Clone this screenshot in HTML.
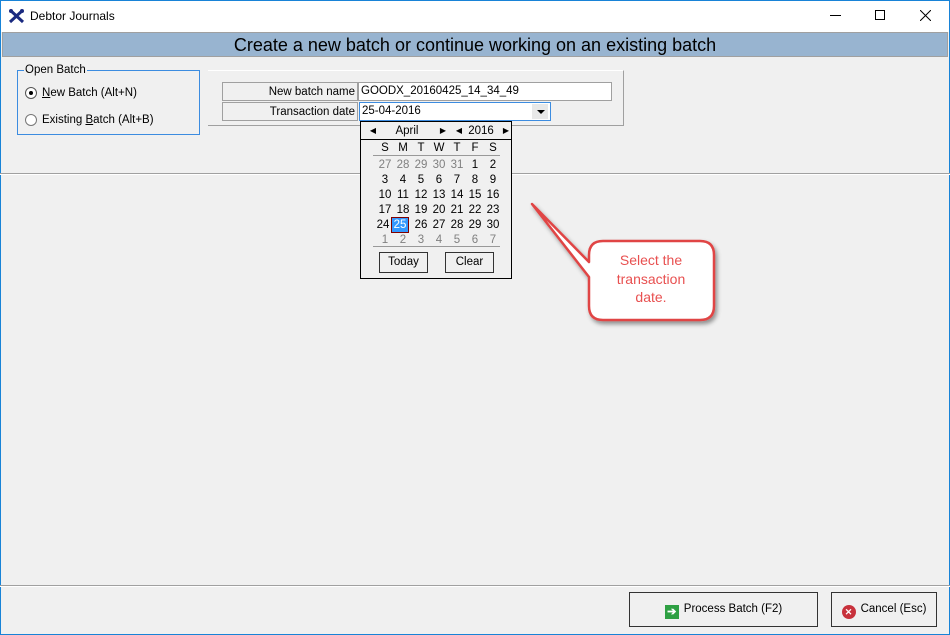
<!DOCTYPE html>
<html><head><style>
*{box-sizing:border-box;margin:0;padding:0}
body{width:950px;height:635px;background:#f0f0f0;font-family:"Liberation Sans",sans-serif;font-size:12px;color:#000;position:relative;overflow:hidden}
.a{position:absolute}
.lbl{position:absolute;border:1px solid #a0a0a0;background:#f0f0f0;text-align:right;padding-right:2px;line-height:18px;font-size:11.5px}
.cal div{position:absolute;width:18px;text-align:center;font-size:11.5px;line-height:14px}
.g{color:#808080}
.btn{position:absolute;border:1px solid #333;background:#f0f0f0;text-align:center;font-size:11.5px}
</style></head><body>
<div class="a" style="left:0;top:0;width:950px;height:635px;border:1px solid #1883d7"></div>
<div class="a" style="left:1px;top:1px;width:948px;height:31px;background:#fff"></div>
<svg class="a" style="left:8px;top:8px" width="18" height="16" viewBox="0 0 18 16"><path d="M2 2 L15 14 M15 2 L2 14" stroke="#1a2a80" stroke-width="3"/><circle cx="3" cy="3" r="2" fill="#1a2a80"/><circle cx="14" cy="3" r="2" fill="#1a2a80"/></svg>
<div class="a" style="left:30px;top:9px;font-size:12px">Debtor Journals</div>
<div class="a" style="left:830px;top:15px;width:11px;height:1px;background:#000"></div>
<div class="a" style="left:875px;top:10px;width:10px;height:10px;border:1px solid #000"></div>
<svg class="a" style="left:920px;top:10px" width="11" height="11"><path d="M0 0L11 11M11 0L0 11" stroke="#000" stroke-width="1"/></svg>
<div class="a" style="left:2px;top:32px;width:946px;height:25px;background:#98b4d0;border:1px solid #a0a0a0;text-align:center;font-size:18px;line-height:24px">Create a new batch or continue working on an existing batch</div>
<div class="a" style="left:17px;top:70px;width:183px;height:65px;border:1px solid #3c8ce0"></div>
<div class="a" style="left:24px;top:64px;background:#f0f0f0;padding:0 1px;font-size:11.5px">Open Batch</div>
<div class="a" style="left:25px;top:87px;width:12px;height:12px;border:1px solid #555;border-radius:50%;background:#fff"><div class="a" style="left:3px;top:3px;width:4px;height:4px;border-radius:50%;background:#000"></div></div>
<div class="a" style="left:42px;top:87px;font-size:11.5px"><u>N</u>ew Batch (Alt+N)</div>
<div class="a" style="left:25px;top:114px;width:12px;height:12px;border:1px solid #777;border-radius:50%;background:#fff"></div>
<div class="a" style="left:42px;top:114px;font-size:11.5px">Existing <u>B</u>atch (Alt+B)</div>
<div class="a" style="left:208px;top:70px;width:416px;height:56px;border-top:1px solid #fff;border-right:1px solid #a0a0a0;border-bottom:1px solid #a0a0a0"></div>
<div class="lbl" style="left:222px;top:82px;width:136px;height:19px">New batch name</div>
<div class="lbl" style="left:222px;top:102px;width:136px;height:19px">Transaction date</div>
<div class="a" style="left:358px;top:82px;width:254px;height:19px;border:1px solid #a0a0a0;background:#fff;padding-left:2px;line-height:17px;font-size:11.5px">GOODX_20160425_14_34_49</div>
<div class="a" style="left:359px;top:102px;width:192px;height:19px;border:1px solid #3c8ce0;background:#fff;padding-left:2px;line-height:17px;font-size:11.5px">25-04-2016<div class="a" style="left:172px;top:1px;width:16px;height:15px;background:#e8e8e8"></div><div class="a" style="left:177px;top:7px;border-left:4px solid transparent;border-right:4px solid transparent;border-top:4px solid #000"></div></div>
<div class="a" style="left:0;top:173px;width:950px;height:2px;background:#a0a0a0;border-bottom:1px solid #fff"></div>
<div class="a cal" style="left:360px;top:121px;width:152px;height:158px;border:1px solid #000;background:#f0f0f0">
<div style="left:0;top:0;width:150px;height:18px;border-bottom:1px solid #000"></div>
<div style="left:3px;top:2px;font-size:8px">◀</div><div style="left:33px;top:2px;width:26px">April</div><div style="left:73px;top:2px;font-size:8px">▶</div>
<div style="left:89px;top:2px;font-size:8px">◀</div><div style="left:107px;top:2px;width:26px">2016</div><div style="left:136px;top:2px;font-size:8px">▶</div>
<div style="left:12px;top:33px;width:127px;height:1px;background:#999"></div>
<div style="left:12px;top:124px;width:127px;height:1px;background:#999"></div>
</div>
<div class="btn" style="left:379px;top:252px;width:49px;height:21px;line-height:19px">Today</div>
<div class="btn" style="left:445px;top:252px;width:49px;height:21px;line-height:19px">Clear</div>
<svg class="a" style="left:525px;top:195px" width="210" height="135" viewBox="525 195 210 135">
<defs><filter id="s"><feDropShadow dx="2" dy="3" stdDeviation="2" flood-color="#000" flood-opacity="0.4"/></filter></defs>
<g filter="url(#s)"><path d="M603 241 H700 Q714 241 714 255 V306 Q714 320 700 320 H603 Q589 320 589 306 V277 L532 204 L589 262 V255 Q589 241 603 241Z" fill="#fff" stroke="#e04444" stroke-width="2.5" stroke-linejoin="round"/></g>
<text x="651" y="265" text-anchor="middle" font-family="Liberation Sans" font-size="14" fill="#e85050">Select the</text>
<text x="651" y="284" text-anchor="middle" font-family="Liberation Sans" font-size="14" fill="#e85050">transaction</text>
<text x="651" y="302" text-anchor="middle" font-family="Liberation Sans" font-size="14" fill="#e85050">date.</text>
</svg>
<div class="a" style="left:0;top:585px;width:950px;height:2px;background:#a0a0a0;border-bottom:1px solid #fff"></div>
<div class="btn" style="left:629px;top:592px;width:189px;height:35px;line-height:33px"><span style="display:inline-block;width:14px;height:14px;background:#2ea043;vertical-align:-3px;margin-right:5px;color:#fff;font-size:11px;line-height:14px;font-weight:bold">➔</span>Process Batch (F2)</div>
<div class="btn" style="left:831px;top:592px;width:106px;height:35px;line-height:33px"><span style="display:inline-block;width:14px;height:14px;border-radius:50%;background:#c8323c;vertical-align:-3px;margin-right:5px;color:#fff;font-size:9px;line-height:14px;font-weight:bold">✕</span>Cancel (Esc)</div>
<div class="a cal" style="left:360px;top:121px">
<div style="left:16px;top:20px">S</div><div style="left:34px;top:20px">M</div><div style="left:52px;top:20px">T</div><div style="left:70px;top:20px">W</div><div style="left:88px;top:20px">T</div><div style="left:106px;top:20px">F</div><div style="left:124px;top:20px">S</div>
<div class="g" style="left:16px;top:37px">27</div><div class="g" style="left:34px;top:37px">28</div><div class="g" style="left:52px;top:37px">29</div><div class="g" style="left:70px;top:37px">30</div><div class="g" style="left:88px;top:37px">31</div><div style="left:106px;top:37px">1</div><div style="left:124px;top:37px">2</div>
<div style="left:16px;top:52px">3</div><div style="left:34px;top:52px">4</div><div style="left:52px;top:52px">5</div><div style="left:70px;top:52px">6</div><div style="left:88px;top:52px">7</div><div style="left:106px;top:52px">8</div><div style="left:124px;top:52px">9</div>
<div style="left:16px;top:67px">10</div><div style="left:34px;top:67px">11</div><div style="left:52px;top:67px">12</div><div style="left:70px;top:67px">13</div><div style="left:88px;top:67px">14</div><div style="left:106px;top:67px">15</div><div style="left:124px;top:67px">16</div>
<div style="left:16px;top:82px">17</div><div style="left:34px;top:82px">18</div><div style="left:52px;top:82px">19</div><div style="left:70px;top:82px">20</div><div style="left:88px;top:82px">21</div><div style="left:106px;top:82px">22</div><div style="left:124px;top:82px">23</div>
<div style="left:14px;top:97px">24</div><div style="left:31px;top:96px;width:18px;height:16px;background:#3399ff;border:1px solid #800000;color:#fff">25</div><div style="left:52px;top:97px">26</div><div style="left:70px;top:97px">27</div><div style="left:88px;top:97px">28</div><div style="left:106px;top:97px">29</div><div style="left:124px;top:97px">30</div>
<div class="g" style="left:16px;top:112px">1</div><div class="g" style="left:34px;top:112px">2</div><div class="g" style="left:52px;top:112px">3</div><div class="g" style="left:70px;top:112px">4</div><div class="g" style="left:88px;top:112px">5</div><div class="g" style="left:106px;top:112px">6</div><div class="g" style="left:124px;top:112px">7</div>
</div>
</body></html>
